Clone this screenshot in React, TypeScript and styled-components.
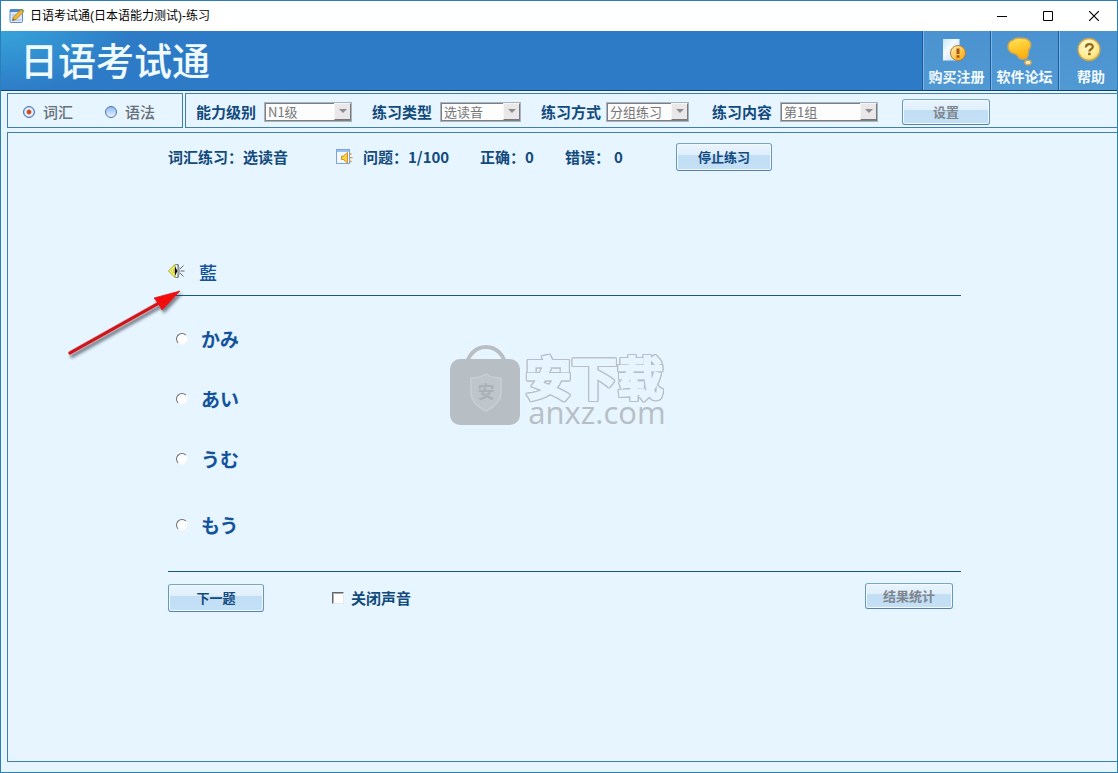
import React, { useId, useState } from "react";
import styled, { createGlobalStyle } from "styled-components";

const sans = `"Liberation Sans", "Noto Sans CJK SC", sans-serif`;
const cjk = `"Noto Sans CJK SC", "Liberation Sans", sans-serif`;
const jp = `"Noto Sans CJK JP", "Liberation Sans", sans-serif`;

const navy = "#134a7c";
const line = "#3f7fa8";
const paper = "#e6f5ff";
const mark = "#b8bfc4";

const GlobalStyle = createGlobalStyle`
  *, *::before, *::after { box-sizing: border-box; }
  body { margin: 0; font-family: ${cjk}; }
`;

const Window = styled.div`
  position: relative;
  display: flex;
  flex-direction: column;
  min-height: 100vh;
  border: 1px solid #2a7fb8;
  background: ${paper};
  color: ${navy};
`;

/* ---------- title bar ---------- */

const TitleBar = styled.div`
  display: flex;
  align-items: center;
  height: 30px;
  padding-left: 8px;
  background: #fff;
`;

const Caption = styled.span`
  flex: 1;
  padding-left: 5px;
  font: 12px/18px ${sans};
  color: #000;
`;

const CaptionButton = styled.button`
  display: grid;
  place-items: center;
  width: 46px;
  height: 28px;
  padding: 0;
  border: 0;
  background: none;
`;

/* ---------- banner ---------- */

const Banner = styled.header`
  display: flex;
  height: 60px;
  border-bottom: 1px solid #0f4275;
  background: radial-gradient(ellipse 130px 62px at 0 0, #36a3da, rgba(54, 163, 218, 0)), #2d7bc6;
`;

const Brand = styled.h1`
  flex: 1;
  margin: 0;
  padding-left: 19px;
  font: 500 38px/56px ${cjk};
  color: #effaff;
`;

const NavButton = styled.button<{ $last?: boolean }>`
  display: flex;
  flex-direction: column;
  align-items: center;
  width: ${(p) => (p.$last ? 59 : 68)}px;
  padding: ${(p) => (p.$last ? "3px 0 0 6px" : "3px 0 0")};
  border: 0;
  border-left: 1px solid #1c5a9e;
  box-shadow: inset 1px 0 #7fb6e4;
  background: linear-gradient(#4b93d0, #5199d3);
  font: 700 14px/20px ${cjk};
  color: #f4fbff;
  white-space: nowrap;
`;

const NavIcon = styled.svg`
  display: block;
  width: 30px;
  height: 32px;
  overflow: visible;
`;

/* ---------- toolbar ---------- */

const Toolbar = styled.div`
  display: flex;
  gap: 2px;
  padding: 2px 0 4px 6px;
`;

const ModeBox = styled.div`
  display: flex;
  align-items: center;
  gap: 32px;
  width: 176px;
  height: 35px;
  padding: 2px 0 0 15px;
  border: 1px solid ${line};
`;

const ModeLabel = styled.label`
  display: flex;
  align-items: center;
  gap: 8px;
  font: 500 15px/20px ${cjk};
  color: #66707a;
`;

const GlossyRadio = styled.input`
  appearance: none;
  width: 12px;
  height: 12px;
  margin: 0;
  border: 1px solid #4a72b4;
  border-radius: 50%;
  background: linear-gradient(#8fbaf4, #eaf5ff);
  &:checked {
    background: radial-gradient(circle, #c4502c 0 2px, #fff 3px, #a9c6ee 5px);
  }
`;

const SettingsBox = styled.div`
  flex: 1;
  display: grid;
  grid-template-columns: 68px 108px 68px 101px 65px 106px 68px 122px auto;
  justify-content: start;
  align-items: center;
  height: 35px;
  padding: 2px 0 0 10px;
  border: 1px solid ${line};
  border-right: 0;
`;

const FieldLabel = styled.label`
  font: 700 15px/20px ${cjk};
  white-space: nowrap;
`;

const Combo = styled.div<{ $width: number }>`
  display: grid;
  width: ${(p) => p.$width}px;
  height: 20px;
  border: 1px solid;
  border-color: #7c8086 #f4f4f4 #f4f4f4 #7c8086;
  outline: 1px solid #a9b4bc;
  outline-offset: -1px;
`;

const ComboSelect = styled.select`
  grid-area: 1 / 1;
  appearance: none;
  width: 100%;
  padding: 0 2px;
  border: 1px solid #7c8086;
  border-radius: 0;
  background: #fdfdfd;
  font: 13px/16px ${cjk};
  color: #777;
  opacity: 1;
`;

const ComboArrow = styled.span`
  grid-area: 1 / 1;
  justify-self: end;
  display: grid;
  place-items: center;
  width: 17px;
  height: 17px;
  border: 1px solid;
  border-color: #f6f6f6 #77797c #77797c #f6f6f6;
  background: #e9e7e8;
  pointer-events: none;
`;

/* ---------- shared button ---------- */

const PushButton = styled.button<{ $size?: "small" }>`
  width: ${(p) => (p.$size ? 88 : 96)}px;
  height: ${(p) => (p.$size ? 26 : 28)}px;
  padding: 0;
  border: 1px solid;
  border-color: #74a9c0 #6796bd #5580b0;
  border-radius: 3px;
  box-shadow: inset 0 0 0 1px #f3faff;
  background: linear-gradient(#e9f4fd, #dfeffc 42%, #c1def4 44%, #c4e0f6);
  font: 700 13px/18px ${cjk};
  color: #11497f;
  &:disabled {
    color: #7e868d;
  }
`;

/* ---------- practice panel ---------- */

const Panel = styled.main`
  flex: 1;
  margin: 0 0 10px 6px;
  padding: 10px 0 24px 160px;
  border: 1px solid ${line};
  border-right: 0;
`;

const Sheet = styled.div`
  max-width: 793px;
`;

const StatusRow = styled.div`
  display: grid;
  grid-template-columns: 168px 27px 117px 85px 111px auto;
  justify-content: start;
  align-items: center;
  font: 700 15px/20px ${cjk};
  white-space: nowrap;
`;

const WrongCount = styled.span`
  padding-left: 4px;
`;

const Question = styled.div`
  display: flex;
  align-items: center;
  gap: 14px;
  height: 46px;
  margin-top: 79px;
  padding-bottom: 2px;
  border-bottom: 1px solid #1d567c;
`;

const SoundButton = styled.button`
  display: block;
  width: 17px;
  height: 17px;
  padding: 0;
  border: 0;
  background: none;
`;

const Word = styled.h2`
  margin: 0;
  font: 500 18px/24px ${jp};
  color: #14539a;
`;

const Options = styled.div`
  display: grid;
  grid-template-rows: repeat(3, 60px) 72px;
  padding: 13px 0 10px 8px;
  border-bottom: 1px solid #1d567c;
`;

const OptionLabel = styled.label`
  display: flex;
  align-items: center;
  gap: 13px;
  font: 700 19px/24px ${jp};
  color: #14539a;
`;

const ClassicRadio = styled.input`
  appearance: none;
  width: 12px;
  height: 12px;
  margin: 0;
  border: 1px solid;
  border-color: #6a6e72 #f4f4f4 #f4f4f4 #6a6e72;
  border-radius: 50%;
  background: #fff;
  &:checked {
    background: radial-gradient(circle, #111 0 2px, #fff 3px);
  }
`;

const Actions = styled.div`
  display: flex;
  align-items: center;
  padding-top: 10px;
`;

const MuteLabel = styled.label`
  flex: 1;
  display: flex;
  align-items: center;
  gap: 7px;
  padding-left: 68px;
  font: 700 15px/20px ${cjk};
`;

const ClassicCheck = styled.input`
  appearance: none;
  width: 12px;
  height: 12px;
  margin: 0;
  border: 1px solid;
  border-color: #63676b #e8e8e8 #e8e8e8 #63676b;
  box-shadow: inset 1px 1px #a9adb0;
  background: #fff;
  &:checked {
    background: #134a7c;
  }
`;

const ResultSlot = styled.div`
  padding: 0 8px 4px 0;
`;

/* ---------- overlays ---------- */

const WatermarkLayer = styled.div`
  position: absolute;
  inset: 0;
  display: flex;
  align-items: center;
  justify-content: center;
  gap: 5px;
  padding: 0 2px 2px 0;
  pointer-events: none;
`;

const WatermarkText = styled.div`
  display: flex;
  flex-direction: column;
  padding-top: 6px;
  color: ${mark};
`;

const WatermarkName = styled.span`
  font: 700 46px/46px ${cjk};
  color: ${paper};
  -webkit-text-stroke: 2px ${paper};
  filter: drop-shadow(1px 0 ${mark}) drop-shadow(-1px 0 ${mark}) drop-shadow(0 1px ${mark}) drop-shadow(0 -1px ${mark});
`;

const WatermarkSite = styled.span`
  padding-left: 3px;
  font: 400 31px/28px "Open Sans", sans-serif;
`;

const Pointer = styled.svg`
  position: absolute;
  left: 59px;
  top: 279px;
  pointer-events: none;
`;

/* ---------- drawings ---------- */

const AppIcon = () => (
  <svg width="16" height="16" viewBox="0 0 16 16" aria-hidden="true">
    <rect x="1" y="1.5" width="12.5" height="13" rx="1" fill="#dbe9fa" stroke="#5b8fd0" />
    <rect x="1" y="1.5" width="12.5" height="2.5" fill="#4f86cc" />
    <path d="M3 7h7M3 9.500h5M3 12h9" stroke="#9dbce4" />
    <path d="M3.500 12.500l1-3.500 7.500-7.500 2.500 2.500-7.500 7.500z" fill="#f2b632" stroke="#a87a1c" strokeWidth=".7" />
    <path d="M12 1.500l1-1 2.500 2.500-1 1z" fill="#6cae4c" />
    <path d="M3.500 12.500l.5-1.800 1.300 1.300z" fill="#333" />
  </svg>
);

const MinimizeGlyph = () => (
  <svg width="10" height="11" aria-hidden="true"><path d="M0 5.500h10" stroke="#000" /></svg>
);
const MaximizeGlyph = () => (
  <svg width="10" height="10" aria-hidden="true"><path d="M.5.5h9v9h-9z" fill="none" stroke="#000" /></svg>
);
const CloseGlyph = () => (
  <svg width="10" height="10" aria-hidden="true"><path d="M0 0l10 10M10 0L0 10" stroke="#000" strokeWidth="1.200" /></svg>
);

const RegisterIcon = () => (
  <NavIcon viewBox="0 0 30 32" aria-hidden="true">
    <defs>
      <linearGradient id="sheet" x1="0" y1="0" x2="1" y2="1">
        <stop offset="0" stopColor="#c8e6fa" /><stop offset=".4" stopColor="#f3fbff" /><stop offset="1" stopColor="#b7dcf5" />
      </linearGradient>
      <linearGradient id="coin" x1="0" y1="0" x2="1" y2="1">
        <stop offset="0" stopColor="#fff5c8" /><stop offset=".6" stopColor="#ffc23c" /><stop offset="1" stopColor="#f2a218" />
      </linearGradient>
    </defs>
    <rect x="1" y="5" width="16.500" height="21.500" fill="url(#sheet)" />
    <circle cx="16" cy="19" r="7.500" fill="url(#coin)" stroke="#b97a32" />
    <path d="M14.500 14.500h3v5.500h-3zM14.500 21.300h3v2.500h-3z" fill="#a5541c" />
  </NavIcon>
);

const ForumIcon = () => (
  <NavIcon viewBox="0 0 30 32" aria-hidden="true">
    <defs>
      <linearGradient id="cloud" x1="0" y1="0" x2=".3" y2="1">
        <stop offset="0" stopColor="#ffe95e" /><stop offset=".6" stopColor="#ffc62a" /><stop offset="1" stopColor="#fbad12" />
      </linearGradient>
    </defs>
    <path
      d="M3 6c2-2 5-2.200 8-1.800 4-.3 7.500 1 9 3.800 1.400 3 .5 5.500-1 7.500-.9 1.400-.6 2.500-.7 4.200-.3 3.300-2.300 5.300-5 5.500-2.800.2-4.600-1.300-5.600-3.300-.6-1.200-1.500-1.500-3-2-3.600-1-6.500-3.400-6.700-6.900C-2.200 9.500.2 6.500 3 6z"
      fill="url(#cloud)" stroke="#c9a55c" strokeWidth="1.500"
    />
    <ellipse cx="18" cy="28.500" rx="3.200" ry="2.400" fill="#ffe9a8" stroke="#c9a55c" strokeWidth="1.200" />
  </NavIcon>
);

const HelpIcon = () => (
  <NavIcon viewBox="0 0 30 32" aria-hidden="true">
    <defs>
      <radialGradient id="help" cx=".4" cy=".3" r=".8">
        <stop offset="0" stopColor="#fffbd0" /><stop offset=".7" stopColor="#ffe98a" /><stop offset="1" stopColor="#e8b83c" />
      </radialGradient>
    </defs>
    <circle cx="13" cy="15.500" r="11" fill="url(#help)" stroke="#c9a452" strokeWidth="1.300" />
    <path d="M9.800 13.500c0-4.500 7-4.500 7-.7 0 2.500-3.500 2.300-3.500 4.700" fill="none" stroke="#94681c" strokeWidth="2.300" />
    <rect x="12.100" y="18.700" width="2.600" height="2.500" fill="#94681c" />
  </NavIcon>
);

const ReadIcon = () => (
  <svg width="17" height="16" viewBox="0 0 17 16" aria-hidden="true">
    <rect x=".5" y=".5" width="13" height="14" fill="#f2f8ff" stroke="#7da5dc" />
    <rect x="1" y="1" width="12" height="2" fill="#9dbfee" />
    <path d="M5.500 7h2l4-3.500v10.500l-4-3.500h-2z" fill="#ffd23c" stroke="#c88a1c" strokeWidth=".9" />
    <path d="M13.500 5h2M14 8.700h2.500M13.500 12.500h2" stroke="#d69a2e" strokeWidth="1.300" />
  </svg>
);

const SpeakerIcon = () => (
  <svg width="17" height="17" viewBox="0 0 17 17" aria-hidden="true">
    <path d="M.5 8L7 1.500v13z" fill="#ffff66" stroke="#a3a31c" />
    <path d="M3 8l2.500-2v4z" fill="#fff" stroke="#a3a31c" strokeWidth=".6" />
    <path d="M7 3.500l2.500 4.500L7 12.500z" fill="#000" />
    <path d="M7.500 1.500h2.500v13H7.500M10 1.500c1.500 3 1.500 10 0 13" fill="none" stroke="#666" strokeWidth=".8" />
    <path d="M12 6l3.500-3.500M12.500 8H16.500M12 10l3.500 3.500" stroke="#666" />
  </svg>
);

const WatermarkBag = () => (
  <svg width="70" height="81" viewBox="0 0 70 81" aria-hidden="true">
    <circle cx="36" cy="21" r="19" fill="none" stroke={mark} strokeWidth="4" />
    <rect x="0" y="14" width="70" height="66" rx="10" fill={mark} />
    <path d="M36 29c4 3 9 4 15 4v14c0 9-7 15-15 19-8-4-15-10-15-19V33c6 0 11-1 15-4z" fill="#bfc6cb" stroke="#c9d0d5" strokeWidth="1.500" />
    <text x="36" y="53" textAnchor="middle" fontFamily="Noto Sans CJK SC" fontWeight="700" fontSize="17" fill="#aab1b7">安</text>
  </svg>
);

const PointerArrow = () => (
  <Pointer width="130" height="86" viewBox="0 0 130 86" aria-hidden="true">
    <defs>
      <filter id="shade" x="-10%" y="-10%" width="125%" height="130%">
        <feDropShadow dx="2" dy="3" stdDeviation="1.800" floodColor="#2b3440" floodOpacity=".6" />
      </filter>
    </defs>
    <g filter="url(#shade)">
      <path d="M10 73L101 22" stroke="#e88a8a" strokeWidth="4" strokeLinecap="round" />
      <path d="M10 73L101 22" stroke="#c8141c" strokeWidth="2.800" strokeLinecap="round" />
      <path d="M120 11L94 18l4 5 4 7z" fill="#f50a0a" stroke="#d81c1c" strokeWidth=".8" />
    </g>
  </Pointer>
);

/* ---------- pieces ---------- */

function Field({ label, value, width }: { label: string; value: string; width: number }) {
  const id = useId();
  return (
    <>
      <FieldLabel htmlFor={id}>{label}</FieldLabel>
      <Combo $width={width}>
        <ComboSelect id={id} disabled defaultValue={value}>
          <option>{value}</option>
        </ComboSelect>
        <ComboArrow>
          <svg width="8" height="4" aria-hidden="true"><path d="M0 0h8L4 4z" fill="#8b8b90" /></svg>
        </ComboArrow>
      </Combo>
    </>
  );
}

const answers = ["かみ", "あい", "うむ", "もう"];

export default function App() {
  const [mode, setMode] = useState("词汇");
  const [answer, setAnswer] = useState("");

  return (
    <>
      <GlobalStyle />
      <Window>
        <TitleBar>
          <AppIcon />
          <Caption>日语考试通(日本语能力测试)-练习</Caption>
          <CaptionButton aria-label="最小化"><MinimizeGlyph /></CaptionButton>
          <CaptionButton aria-label="最大化"><MaximizeGlyph /></CaptionButton>
          <CaptionButton aria-label="关闭"><CloseGlyph /></CaptionButton>
        </TitleBar>

        <Banner>
          <Brand>日语考试通</Brand>
          <NavButton><RegisterIcon />购买注册</NavButton>
          <NavButton><ForumIcon />软件论坛</NavButton>
          <NavButton $last><HelpIcon />帮助</NavButton>
        </Banner>

        <Toolbar>
          <ModeBox>
            {["词汇", "语法"].map((name) => (
              <ModeLabel key={name}>
                <GlossyRadio type="radio" name="mode" checked={mode === name} onChange={() => setMode(name)} />
                {name}
              </ModeLabel>
            ))}
          </ModeBox>
          <SettingsBox>
            <Field label="能力级别" value="N1级" width={88} />
            <Field label="练习类型" value="选读音" width={81} />
            <Field label="练习方式" value="分组练习" width={83} />
            <Field label="练习内容" value="第1组" width={98} />
            <PushButton $size="small" disabled>设置</PushButton>
          </SettingsBox>
        </Toolbar>

        <Panel>
          <Sheet>
            <StatusRow>
              <span>词汇练习：选读音</span>
              <ReadIcon />
              <span>问题：1/100</span>
              <span>正确：0</span>
              <span>错误：<WrongCount>0</WrongCount></span>
              <PushButton>停止练习</PushButton>
            </StatusRow>

            <Question>
              <SoundButton aria-label="朗读"><SpeakerIcon /></SoundButton>
              <Word>藍</Word>
            </Question>

            <Options>
              {answers.map((text) => (
                <OptionLabel key={text}>
                  <ClassicRadio type="radio" name="answer" checked={answer === text} onChange={() => setAnswer(text)} />
                  {text}
                </OptionLabel>
              ))}
            </Options>

            <Actions>
              <PushButton>下一题</PushButton>
              <MuteLabel>
                <ClassicCheck type="checkbox" />
                关闭声音
              </MuteLabel>
              <ResultSlot>
                <PushButton $size="small" disabled>结果统计</PushButton>
              </ResultSlot>
            </Actions>
          </Sheet>
        </Panel>

        <PointerArrow />
        <WatermarkLayer>
          <WatermarkBag />
          <WatermarkText>
            <WatermarkName>安下载</WatermarkName>
            <WatermarkSite>anxz.com</WatermarkSite>
          </WatermarkText>
        </WatermarkLayer>
      </Window>
    </>
  );
}
